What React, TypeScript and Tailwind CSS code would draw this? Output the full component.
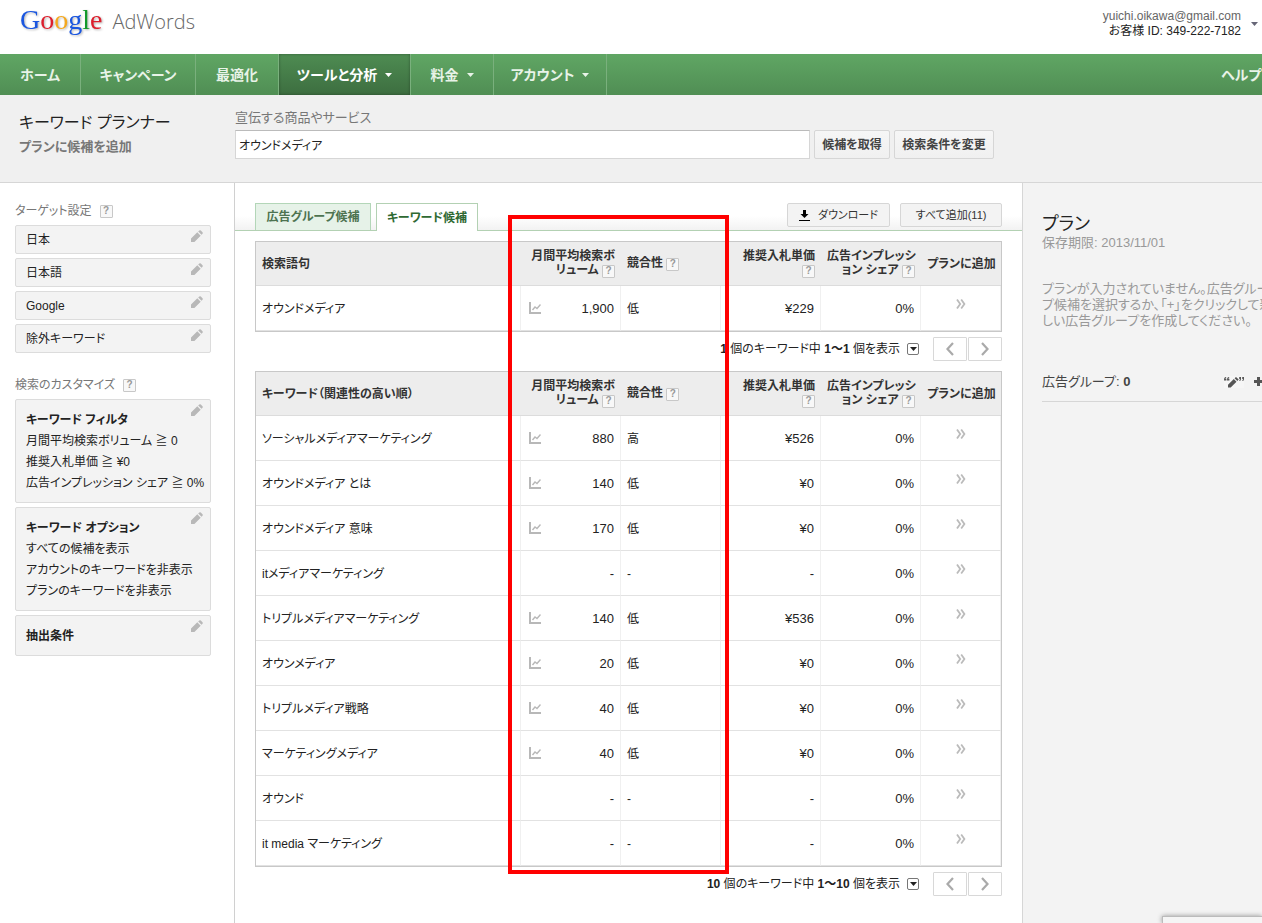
import { useState } from 'react'
import type { ReactNode } from 'react'

const navItems = [
  { label: 'ホーム', width: 'w-[81px]' },
  { label: 'キャンペーン', width: 'w-[115px]' },
  { label: '最適化', width: 'w-[83px]' },
  { label: 'ツールと分析', width: 'w-[132px]', menu: true, active: true },
  { label: '料金', width: 'w-[83px]', menu: true },
  { label: 'アカウント', width: 'w-[113px]', menu: true },
]

const targets = ['日本', '日本語', 'Google', '除外キーワード']

const filters = [
  {
    title: 'キーワード フィルタ',
    lines: ['月間平均検索ボリューム ≧ 0', '推奨入札単価 ≧ ¥0', '広告インプレッション シェア ≧ 0%'],
  },
  {
    title: 'キーワード オプション',
    lines: ['すべての候補を表示', 'アカウントのキーワードを非表示', 'プランのキーワードを非表示'],
  },
  { title: '抽出条件', lines: [] },
]

type Row = { keyword: string; volume: string; competition: string; bid: string; share: string }

const searchRows: Row[] = [
  { keyword: 'オウンドメディア', volume: '1,900', competition: '低', bid: '¥229', share: '0%' },
]

const ideaRows: Row[] = [
  { keyword: 'ソーシャルメディアマーケティング', volume: '880', competition: '高', bid: '¥526', share: '0%' },
  { keyword: 'オウンドメディア とは', volume: '140', competition: '低', bid: '¥0', share: '0%' },
  { keyword: 'オウンドメディア 意味', volume: '170', competition: '低', bid: '¥0', share: '0%' },
  { keyword: 'itメディアマーケティング', volume: '-', competition: '-', bid: '-', share: '0%' },
  { keyword: 'トリプルメディアマーケティング', volume: '140', competition: '低', bid: '¥536', share: '0%' },
  { keyword: 'オウンメディア', volume: '20', competition: '低', bid: '¥0', share: '0%' },
  { keyword: 'トリプルメディア戦略', volume: '40', competition: '低', bid: '¥0', share: '0%' },
  { keyword: 'マーケティングメディア', volume: '40', competition: '低', bid: '¥0', share: '0%' },
  { keyword: 'オウンド', volume: '-', competition: '-', bid: '-', share: '0%' },
  { keyword: 'it media マーケティング', volume: '-', competition: '-', bid: '-', share: '0%' },
]

function Caret({ className = '' }: { className?: string }) {
  return (
    <svg viewBox="0 0 7 4" className={`w-[7px] h-1 shrink-0 ${className}`} fill="currentColor">
      <path d="M0 0h7L3.5 4z" />
    </svg>
  )
}

function Pencil() {
  return (
    <svg viewBox="0 0 12 12" className="w-3 h-3" fill="#b8b8b8">
      <path d="M0 12V8.600L6.300 2.300l3.400 3.400L3.400 12zM7.200 1.500L8.300.5q.8-.7 1.500 0l1.700 1.700q.7.8 0 1.500L10.500 4.800z" />
    </svg>
  )
}

function Help() {
  return (
    <button
      aria-label="ヘルプ"
      className="inline-flex items-center justify-center w-[13px] h-[13px] border border-[#c8c8c8] bg-[#f8f8f8] rounded-[1px] text-[10px] leading-none font-bold text-[#999] align-middle shrink-0"
    >
      ?
    </button>
  )
}

function ChartIcon() {
  return (
    <svg viewBox="0 0 12 12" className="w-3 h-3" fill="none" stroke="#b8b8b8">
      <path d="M1 0v11h11" strokeWidth="2" />
      <path d="M3.5 8L6 5l2 1.5L11.5 2.5" strokeWidth="1.4" />
    </svg>
  )
}

function EditBox({ label, children }: { label: string; children: ReactNode }) {
  return (
    <div className="flex justify-between border border-[#dcdcdc] rounded-[2px] bg-[#f3f3f3] text-[#222] whitespace-nowrap">
      <div className="pl-[10px] w-0">{children}</div>
      <button aria-label={label} className="self-start pt-1 pr-[7px]">
        <Pencil />
      </button>
    </div>
  )
}

function KeywordTable({ title, rows }: { title: string; rows: Row[] }) {
  const th = 'h-11 px-[6px] border-b border-[#dcdcdc] font-bold'
  const td = 'h-[45px] px-[6px] pt-px border-b border-r border-b-[#e2e2e2] border-r-[#f0f0f0]'
  return (
    <table className="w-full table-fixed border-separate border-spacing-0 border border-[#c8c8c8] text-[#222]">
      <thead className="bg-[#ededed] text-xs leading-[14px] text-[#333]">
        <tr>
          <th className={`${th} text-left`}>{title}</th>
          <th className={`${th} w-[100px] text-right whitespace-nowrap`}>
            月間平均検索ボ<br />
            リューム <Help />
          </th>
          <th className={`${th} w-[100px] text-left`}>
            競合性 <Help />
          </th>
          <th className={`${th} w-[100px] text-right whitespace-nowrap`}>
            推奨入札単価<br />
            <Help />
          </th>
          <th className={`${th} w-[100px] text-right whitespace-nowrap`}>
            広告インプレッシ<br />
            ョン シェア <Help />
          </th>
          <th className={`${th} w-20 whitespace-nowrap`}>プランに追加</th>
        </tr>
      </thead>
      <tbody className="text-[13px]">
        {rows.map((row) => (
          <tr key={row.keyword}>
            <td className={`${td} text-xs`}>{row.keyword}</td>
            <td className={td}>
              <div className="flex items-center justify-between pl-[2px]">
                {row.volume !== '-' ? <ChartIcon /> : <span />}
                <span>{row.volume}</span>
              </div>
            </td>
            <td className={`${td} text-xs`}>{row.competition}</td>
            <td className={`${td} text-right`}>{row.bid}</td>
            <td className={`${td} text-right`}>{row.share}</td>
            <td className={`${td} text-center`}>
              <button aria-label="プランに追加" className="pb-[10px] align-middle">
                <svg viewBox="0 0 10 10" className="w-[10px] h-[10px]" fill="none" stroke="#bbb" strokeWidth="1.8">
                  <path d="M1 .5L4.2 5 1 9.5M5.2.5L8.4 5 5.2 9.5" />
                </svg>
              </button>
            </td>
          </tr>
        ))}
      </tbody>
    </table>
  )
}

function Pager({ total }: { total: number }) {
  const button = 'flex items-center justify-center w-[34px] h-6 border border-[#d8d8d8] rounded-[1px]'
  return (
    <div className="flex items-center justify-end h-[39px] pb-[5px] text-[#222]">
      <span>
        <b>{total}</b> 個のキーワード中 <b>1～{total}</b> 個を表示
      </span>
      <button
        aria-label="表示件数"
        className="flex items-center justify-center w-3 h-3 ml-[7px] mr-[14px] border border-[#777] rounded-[2px]"
      >
        <Caret />
      </button>
      <div className="flex gap-px">
        <button aria-label="前へ" className={button}>
          <svg viewBox="0 0 8 14" className="w-2 h-[14px]" fill="none" stroke="#aaa" strokeWidth="2.2">
            <path d="M7 1L1.5 7 7 13" />
          </svg>
        </button>
        <button aria-label="次へ" className={button}>
          <svg viewBox="0 0 8 14" className="w-2 h-[14px]" fill="none" stroke="#aaa" strokeWidth="2.2">
            <path d="M1 1l5.5 6L1 13" />
          </svg>
        </button>
      </div>
    </div>
  )
}

export default function App() {
  const [query, setQuery] = useState('オウンドメディア')
  const actionButton =
    'h-[29px] border border-[#d6d6d6] rounded-[2px] bg-linear-to-b from-[#f6f6f6] to-[#f0f0f0] font-bold text-[#444] whitespace-nowrap'

  return (
    <div className="relative flex flex-col min-h-screen overflow-hidden bg-white text-xs font-['Liberation_Sans','Noto_Sans_CJK_JP',sans-serif] [font-feature-settings:'palt']">
      <header className="flex justify-between h-[54px] pl-5 pr-1">
        <a href="#" className="flex items-baseline gap-[10px] pt-1 text-[#666]">
          <span className="font-['Liberation_Serif',serif] text-[28px] leading-8 drop-shadow-[1px_1px_1px_rgba(0,0,0,0.3)]">
            <span className="text-[#1a56e0]">G</span>
            <span className="text-[#dd1f2d]">o</span>
            <span className="text-[#f5a81c]">o</span>
            <span className="text-[#1a56e0]">g</span>
            <span className="text-[#12992c]">l</span>
            <span className="text-[#dd1f2d]">e</span>
          </span>
          <span className="font-['Open_Sans',sans-serif] font-light text-xl leading-8">AdWords</span>
        </a>
        <button className="flex self-start items-center gap-[10px] pt-[9px] text-right leading-[15px]">
          <span>
            <span className="block text-[#666]">yuichi.oikawa@gmail.com</span>
            <span className="block text-[#222]">お客様 ID: 349-222-7182</span>
          </span>
          <Caret className="text-[#667]" />
        </button>
      </header>

      <nav className="flex h-[41px] bg-linear-to-b from-[#60a664] to-[#508e54] text-sm font-bold text-[#e8f3e8] whitespace-nowrap">
        {navItems.map((item) => (
          <a
            key={item.label}
            href="#"
            className={`flex items-center justify-center gap-2 border-r border-[#7ab07d] ${item.width} ${
              item.active ? 'bg-linear-to-b from-[#4e8c52] to-[#3d6e40] text-white shadow-[inset_0_0_3px_rgba(0,0,0,0.35)]' : ''
            }`}
          >
            {item.label}
            {item.menu && <Caret />}
          </a>
        ))}
        <a href="#" className="flex items-center w-[41px] ml-auto">
          ヘルプ
        </a>
      </nav>

      <section className="flex h-[88px] bg-[#f0f0f0] border-b border-[#d6d6d6]">
        <div className="w-[235px] shrink-0 pl-[19px] pt-4 leading-6">
          <h1 className="text-base leading-6 text-[#222]">キーワード プランナー</h1>
          <p className="text-[13px] leading-6 font-bold text-[#777]">プランに候補を追加</p>
        </div>
        <div className="flex-1 pt-[13px]">
          <label htmlFor="product" className="block mb-[2px] text-[13px] leading-5 text-[#777]">
            宣伝する商品やサービス
          </label>
          <div className="flex gap-1">
            <input
              id="product"
              value={query}
              onChange={(e) => setQuery(e.target.value)}
              className="flex-1 max-w-[575px] h-[29px] px-[3px] bg-white border border-[#d6d6d6] border-t-[#bbb] text-[#222]"
            />
            <button className={`${actionButton} w-[76px]`}>候補を取得</button>
            <button className={`${actionButton} w-[100px]`}>検索条件を変更</button>
          </div>
        </div>
      </section>

      <div className="flex flex-1">
        <aside className="w-[235px] shrink-0 pt-[18px] pl-[15px] pr-[23px] border-r border-[#d0d0d0]">
          <h2 className="flex items-center gap-2 mb-1 leading-5 text-[#777]">
            ターゲット設定 <Help />
          </h2>
          <div className="flex flex-col gap-1">
            {targets.map((target) => (
              <EditBox key={target} label={`${target}を編集`}>
                <p className="leading-7 -mb-px">{target}</p>
              </EditBox>
            ))}
          </div>
          <h2 className="flex items-center gap-2 mt-[22px] mb-1 leading-5 text-[#777]">
            検索のカスタマイズ <Help />
          </h2>
          <div className="flex flex-col gap-1">
            {filters.map((filter) => (
              <EditBox key={filter.title} label={`${filter.title}を編集`}>
                <div className="pt-[10px] pb-2 leading-[21px]">
                  <h3 className="font-bold">{filter.title}</h3>
                  {filter.lines.map((line) => (
                    <p key={line}>{line}</p>
                  ))}
                </div>
              </EditBox>
            ))}
          </div>
        </aside>

        <main className="relative flex-1">
          <div className="flex justify-between h-12 pt-5 px-5 border-b border-[#b3d1b3] bg-linear-to-b from-white from-70% to-[#f2f2f2]">
            <div className="flex gap-[5px] font-bold">
              <button className="w-[116px] h-[27px] border border-b-0 border-[#b3d6b8] bg-[#e6f2e8] text-[#4d7350]">
                広告グループ候補
              </button>
              <button className="w-[102px] h-7 border border-b-0 border-[#b3d1b3] bg-white text-[#2f6a33]">
                キーワード候補
              </button>
            </div>
            <div className="flex gap-[10px] text-[11px]">
              <button className="flex items-center justify-center gap-2 w-[103px] h-6 border border-[#d6d6d6] rounded-[2px] bg-[#f3f3f3] text-[#333]">
                <svg viewBox="0 0 11 11" className="w-[11px] h-[11px]" fill="#000">
                  <path d="M4 0h3v4h2.5l-4 4-4-4H4zM0 10h11v1H0z" />
                </svg>
                ダウンロード
              </button>
              <button className="w-[102px] h-6 border border-[#d6d6d6] rounded-[2px] bg-[#f3f3f3] text-[#333]">
                すべて追加(11)
              </button>
            </div>
          </div>
          <div className="px-5 pt-[10px]">
            <KeywordTable title="検索語句" rows={searchRows} />
            <Pager total={1} />
            <KeywordTable title="キーワード（関連性の高い順）" rows={ideaRows} />
            <Pager total={10} />
          </div>
          {/* Highlight around the volume and competition columns */}
          <div className="absolute left-[273px] top-8 w-[221px] h-[659px] border-4 border-[#ff0000] pointer-events-none" />
        </main>

        <aside className="w-60 shrink-0 overflow-hidden pt-[30px] pl-[19px] bg-[#f3f3f3] border-l border-[#d6d6d6] text-[13px] leading-4 text-[#999] whitespace-nowrap">
          <h2 className="text-lg leading-[22px] text-[#222]">プラン</h2>
          <p>保存期限: 2013/11/01</p>
          <p className="mt-[30px]">
            プランが入力されていません。広告グルー<br />
            プ候補を選択するか、「+」をクリックして新<br />
            しい広告グループを作成してください。
          </p>
          <div className="flex items-center justify-between h-10 mt-[33px] border-b border-[#d6d6d6] text-[#444]">
            <span>
              広告グループ: <b>0</b>
            </span>
            <div className="flex items-center gap-[10px]">
              <button aria-label="引用符を編集" className="bg-[#f6f6f6]">
                <svg viewBox="0 0 20 12" className="w-5 h-3" fill="#555">
                  <path d="M4 11.500V8.800L9.800 3l2.700 2.700L6.700 11.500zM10.600 2.200L12 .900l2.700 2.700L13.300 4.900z" />
                  <path d="M0 4q0-3 2-3l.3.7Q1.300 2 1.400 2.700h1V4.500H0zM3 4q0-3 2-3l.3.7Q4.300 2 4.400 2.700h1V4.500H3zM17 1v2q0 2-1.500 2l-.3-.6q.8-.3.800-1.300h-.8V1zM20 1v2q0 2-1.500 2l-.3-.6q.8-.3.800-1.300h-.8V1z" />
                </svg>
              </button>
              <button aria-label="追加" className="w-2 overflow-hidden">
                <svg viewBox="0 0 9 9" className="w-[9px] h-[9px] max-w-none" fill="#555">
                  <path d="M3 0h3v3h3v3H6v3H3V6H0V3h3z" />
                </svg>
              </button>
            </div>
          </div>
        </aside>
      </div>

      <div className="absolute bottom-0 right-0 w-[100px] h-[7px] border-t border-l border-[#bbb] bg-[#f5f5f5] shadow-[0_0_5px_rgba(0,0,0,0.4)]" />
    </div>
  )
}
